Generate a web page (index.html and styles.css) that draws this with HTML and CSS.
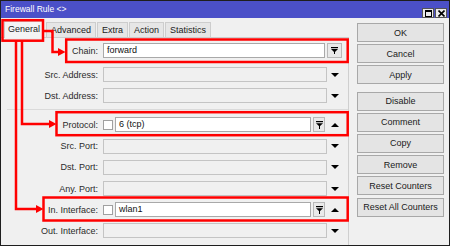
FILE: index.html
```html
<!DOCTYPE html>
<html lang="en">
<head>
    <meta charset="UTF-8">
    <title>Firewall Rule</title>
    <link rel="stylesheet" href="styles.css">
</head>
<body>
<div class="window">
    <div class="titlebar">
        <span class="title">Firewall Rule &lt;&gt;</span>
        <div class="winbtns">
            <span class="wbtn"><svg width="7" height="7" viewBox="0 0 7 7"><rect x="0.5" y="0.5" width="6" height="6" fill="none" stroke="#000"/><rect x="0" y="0" width="7" height="2" fill="#000"/></svg></span>
            <span class="wbtn"><svg width="7" height="7" viewBox="0 0 7 7"><path d="M0.5 0.5 L6.5 6.5 M6.5 0.5 L0.5 6.5" stroke="#000" stroke-width="1.6"/></svg></span>
        </div>
    </div>
    <div class="main">
        <div class="left">
            <div class="tabs">
                <div class="tab active">General</div>
                <div class="tab">Advanced</div>
                <div class="tab">Extra</div>
                <div class="tab">Action</div>
                <div class="tab">Statistics</div>
            </div>
            <div class="panel">
                <div class="row first">
                    <label class="label">Chain:</label>
                    <div class="field on chain">forward</div>
                    <span class="pick"><svg width="7" height="7" viewBox="0 0 7 7"><rect x="0" y="0" width="7" height="1.2" fill="#000"/><path d="M0 2 H7 L3.5 5.5 Z" fill="#000"/><rect x="3" y="5" width="1" height="2" fill="#000"/></svg></span>
                </div>
                <div class="row">
                    <label class="label">Src. Address:</label>
                    <div class="field wide"></div>
                    <span class="slot down"></span>
                </div>
                <div class="row">
                    <label class="label">Dst. Address:</label>
                    <div class="field wide"></div>
                    <span class="slot down"></span>
                </div>
                <div class="sep"></div>
                <div class="row">
                    <label class="label">Protocol:</label>
                    <span class="check"></span>
                    <div class="field on short">6 (tcp)</div>
                    <span class="pick small"><svg width="7" height="8" viewBox="0 0 7 8"><rect x="0" y="0" width="7" height="1.2" fill="#000"/><path d="M0 2.2 H7 L3.5 5.6 Z" fill="#000"/><rect x="3" y="5" width="1" height="3" fill="#000"/></svg></span>
                    <span class="slot up"></span>
                </div>
                <div class="row">
                    <label class="label">Src. Port:</label>
                    <div class="field wide"></div>
                    <span class="slot down"></span>
                </div>
                <div class="row">
                    <label class="label">Dst. Port:</label>
                    <div class="field wide"></div>
                    <span class="slot down"></span>
                </div>
                <div class="row">
                    <label class="label">Any. Port:</label>
                    <div class="field wide"></div>
                    <span class="slot down"></span>
                </div>
                <div class="row">
                    <label class="label">In. Interface:</label>
                    <span class="check"></span>
                    <div class="field on short">wlan1</div>
                    <span class="pick small"><svg width="7" height="8" viewBox="0 0 7 8"><rect x="0" y="0" width="7" height="1.2" fill="#000"/><path d="M0 2.2 H7 L3.5 5.6 Z" fill="#000"/><rect x="3" y="5" width="1" height="3" fill="#000"/></svg></span>
                    <span class="slot up"></span>
                </div>
                <div class="row">
                    <label class="label">Out. Interface:</label>
                    <div class="field wide"></div>
                    <span class="slot down"></span>
                </div>
            </div>
        </div>
        <div class="actions">
            <button class="btn">OK</button>
            <button class="btn">Cancel</button>
            <button class="btn">Apply</button>
            <button class="btn spaced">Disable</button>
            <button class="btn">Comment</button>
            <button class="btn">Copy</button>
            <button class="btn">Remove</button>
            <button class="btn">Reset Counters</button>
            <button class="btn">Reset All Counters</button>
        </div>
    </div>
    <!-- red callouts drawn over the form -->
    <svg class="marks" width="450" height="246" viewBox="0 0 450 246">
        <g fill="none" stroke="#f00" stroke-width="2.5">
            <rect x="2.5" y="20.2" width="40.5" height="20.5"/>
            <rect x="66.2" y="39.5" width="281.5" height="22.5"/>
            <rect x="56.5" y="112.2" width="291.2" height="23"/>
            <rect x="43.5" y="197.5" width="304.2" height="23"/>
            <path d="M43 31 H52.5 V52 H59"/>
            <path d="M22 41 V124 H50"/>
            <path d="M16 41 V209 H37"/>
        </g>
        <g fill="#f00">
            <polygon points="58,48 65.5,52 58,56"/>
            <polygon points="49,120 56.5,124 49,128"/>
            <polygon points="36,205 43.5,209 36,213"/>
        </g>
    </svg>
</div>
</body>
</html>
```

FILE: styles.css
```css
*{
    margin: 0;
    padding: 0;
    box-sizing: border-box;
}
body{
    font-family: "Liberation Sans", Arial, sans-serif;
    font-size: 9px;
    color: #1a1a1a;
    background: #fff;
}
.window{
    width: 450px;
    height: 246px;
    border: 1px solid #1e1e1e;
    background: #f0f0f0;
    position: relative;
    display: flex;
    flex-direction: column;
}
.titlebar{
    height: 17px;
    background: #4b50c8;
    display: flex;
    align-items: stretch;
    justify-content: space-between;
    padding: 0 2px 0 4px;
}
.title{
    color: #fff;
    font-size: 8.5px;
    line-height: 17px;
}
.winbtns{
    display: flex;
    align-items: flex-end;
    gap: 1px;
}
.wbtn{
    width: 12px;
    height: 10px;
    background: #ececec;
    border: 1px solid #555;
    display: flex;
    align-items: center;
    justify-content: center;
}
.main{
    flex: 1;
    display: flex;
}
.left{
    width: 348px;
    display: flex;
    flex-direction: column;
}
.tabs{
    display: flex;
    padding: 3px 0 0 3px;
    height: 19px;
    align-items: flex-end;
}
.tab{
    height: 15px;
    line-height: 14px;
    padding: 0 4px;
    background: #e6e6e6;
    border: 1px solid #cdcdcd;
    border-bottom: none;
    margin-right: 1px;
}
.tab.active{
    height: 17px;
    background: #f4f4f4;
    padding: 0 3px;
    line-height: 15px;
    margin-right: 2px;
    margin-bottom: -1px;
    position: relative;
}
.panel{
    flex: 1;
    border-top: 1px solid #cdcdcd;
    border-right: 1px solid #cfcfcf;
    padding-top: 2px;
}
.row{
    display: flex;
    align-items: center;
    height: 21.2px;
}
.row.first{
    height: 21px;
    margin-bottom: 3px;
}
.label{
    width: 97px;
    text-align: right;
    margin-right: 5px;
    color: #2a2a2a;
}
.field{
    height: 15px;
    line-height: 13px;
    padding-left: 3px;
    border: 1px solid #c4c4c4;
    background: #f0f0f0;
    color: #111;
}
.field.on{
    background: #fff;
    border-color: #a9a9a9;
}
.field.wide{
    width: 224px;
}
.field.chain{
    width: 222px;
    margin-right: 2px;
}
.field.short{
    width: 196px;
    margin-right: 2px;
}
.check{
    width: 10px;
    height: 10px;
    border: 1px solid #a0a0a0;
    background: #fff;
    margin-right: 2px;
}
.pick{
    width: 15px;
    height: 15px;
    border: 1px solid #b8b8b8;
    background: #e9e9e9;
    display: flex;
    align-items: center;
    justify-content: center;
}
.pick.small{
    width: 12px;
    margin-right: 2px;
}
.slot{
    width: 16px;
    height: 15px;
    display: flex;
    align-items: center;
    justify-content: center;
}
.slot.down::after{
    content: "";
    border-left: 4px solid transparent;
    border-right: 4px solid transparent;
    border-top: 4px solid #000;
}
.slot.up::after{
    content: "";
    border-left: 4px solid transparent;
    border-right: 4px solid transparent;
    border-bottom: 4px solid #000;
}
.sep{
    height: 1px;
    background: #dadada;
    margin: 3px 0 4px 6px;
}
.actions{
    flex: 1;
    display: flex;
    flex-direction: column;
    gap: 2.2px;
    padding: 5px 0 0 8px;
}
.btn{
    width: 87px;
    height: 19px;
    font-family: "Liberation Sans", Arial, sans-serif;
    font-size: 9px;
    color: #1a1a1a;
    background: #e4e4e4;
    border: 1px solid #a8a8a8;
}
.btn.spaced{
    margin-top: 5px;
}
.marks{
    position: absolute;
    top: -1px;
    left: -1px;
}
```
